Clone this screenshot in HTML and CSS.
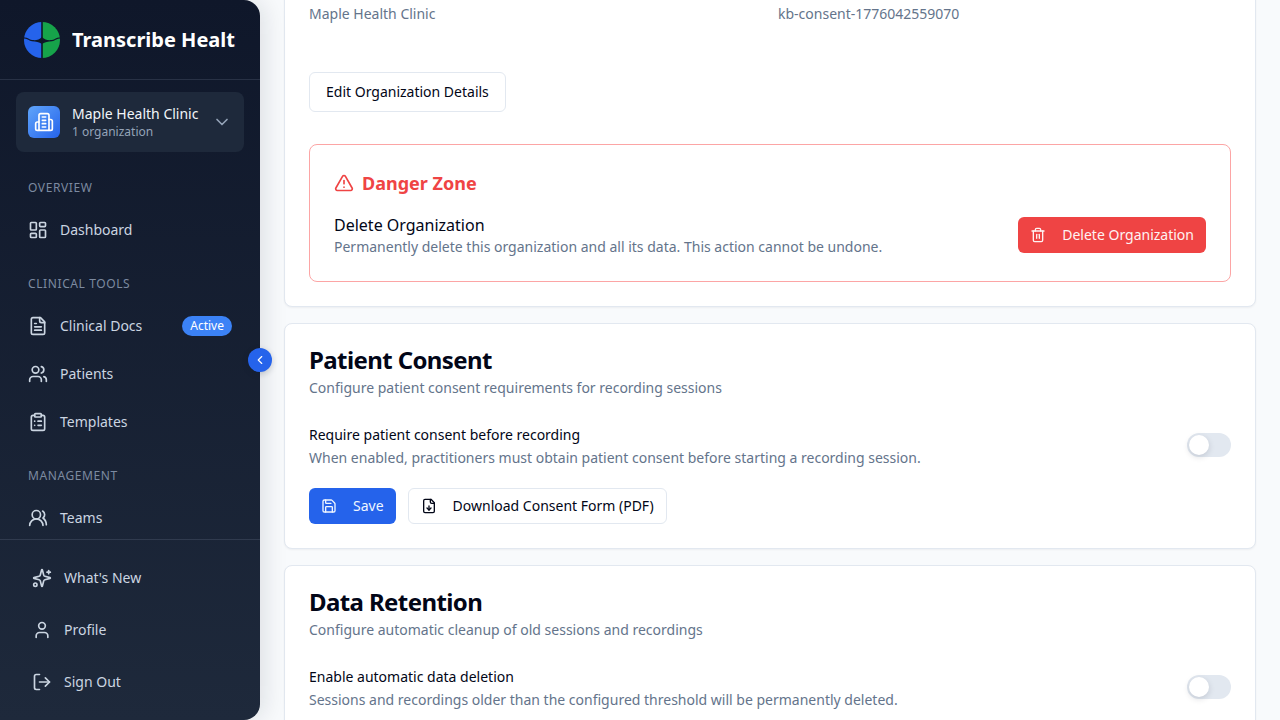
FILE: index.html
```html
<!DOCTYPE html>
<html lang="en">
<head>
  <meta charset="UTF-8">
  <title>Transcribe Health - Settings</title>
  <link rel="stylesheet" href="styles.css">
</head>
<body>
  <aside class="sidebar">
    <div class="brand">
      <svg class="logo" viewBox="0 0 36 36">
        <path d="M18 0a18 18 0 0 0-18 18 18 18 0 0 0 18 18z" fill="#2563eb"/>
        <path d="M18 0a18 18 0 0 1 18 18 18 18 0 0 1-18 18z" fill="#16a34a"/>
        <path d="M0 15.5C3 15 5 17.5 8 18 12 18.5 15 18 18 15 21 18 24 18.5 28 18 31 17.5 33 15 36 15.5L36 16.5C33 16 31 19 28 19.3 24 19.6 21 20 18 22 15 20 12 19.6 8 19.3 5 19 3 16 0 16.5Z" fill="#0f172a"/>
        <rect x="17.2" y="0" width="1.6" height="36" fill="#0f172a"/>
      </svg>
      <span class="brand-name">Transcribe Health</span>
    </div>

    <div class="org-wrap">
      <div class="org">
        <div class="org-icon">
          <svg class="icon" viewBox="0 0 24 24"><path d="M6 22V4a2 2 0 0 1 2-2h8a2 2 0 0 1 2 2v18Z"/><path d="M6 12H4a2 2 0 0 0-2 2v6a2 2 0 0 0 2 2h2"/><path d="M18 9h2a2 2 0 0 1 2 2v9a2 2 0 0 1-2 2h-2"/><path d="M10 6h4"/><path d="M10 10h4"/><path d="M10 14h4"/><path d="M10 18h4"/></svg>
        </div>
        <div class="org-text">
          <div class="org-name">Maple Health Clinic</div>
          <div class="org-count">1 organization</div>
        </div>
        <svg class="org-chevron" viewBox="0 0 24 24"><path d="m6 9 6 6 6-6"/></svg>
      </div>
    </div>

    <nav class="nav">
      <div class="nav-label">Overview</div>
      <a class="nav-item">
        <svg class="nav-icon" viewBox="0 0 24 24"><rect x="3" y="3" width="7" height="9" rx="1"/><rect x="14" y="3" width="7" height="5" rx="1"/><rect x="14" y="12" width="7" height="9" rx="1"/><rect x="3" y="16" width="7" height="5" rx="1"/></svg>
        Dashboard
      </a>

      <div class="nav-label spaced">Clinical Tools</div>
      <a class="nav-item">
        <svg class="nav-icon" viewBox="0 0 24 24"><path d="M15 2H6a2 2 0 0 0-2 2v16a2 2 0 0 0 2 2h12a2 2 0 0 0 2-2V7Z"/><path d="M14 2v4a2 2 0 0 0 2 2h4"/><path d="M10 9H8"/><path d="M16 13H8"/><path d="M16 17H8"/></svg>
        Clinical Docs
        <span class="pill">Active</span>
      </a>
      <a class="nav-item">
        <svg class="nav-icon" viewBox="0 0 24 24"><path d="M16 21v-2a4 4 0 0 0-4-4H6a4 4 0 0 0-4 4v2"/><circle cx="9" cy="7" r="4"/><path d="M22 21v-2a4 4 0 0 0-3-3.87"/><path d="M16 3.13a4 4 0 0 1 0 7.75"/></svg>
        Patients
      </a>
      <a class="nav-item">
        <svg class="nav-icon" viewBox="0 0 24 24"><rect x="8" y="2" width="8" height="4" rx="1"/><path d="M16 4h2a2 2 0 0 1 2 2v14a2 2 0 0 1-2 2H6a2 2 0 0 1-2-2V6a2 2 0 0 1 2-2h2"/><path d="M12 11h4"/><path d="M12 16h4"/><path d="M8 11h.01"/><path d="M8 16h.01"/></svg>
        Templates
      </a>

      <div class="nav-label spaced">Management</div>
      <a class="nav-item">
        <svg class="nav-icon" viewBox="0 0 24 24"><path d="M18 21a8 8 0 0 0-16 0"/><circle cx="10" cy="8" r="5"/><path d="M22 20c0-3.37-2-6.5-4-8a5 5 0 0 0-.45-8.3"/></svg>
        Teams
      </a>
    </nav>

    <div class="side-footer">
      <a class="foot-item">
        <svg class="nav-icon" viewBox="0 0 24 24"><path d="M9.937 15.5A2 2 0 0 0 8.5 14.063l-6.135-1.582a.5.5 0 0 1 0-.962L8.5 9.936A2 2 0 0 0 9.937 8.5l1.582-6.135a.5.5 0 0 1 .963 0L14.063 8.5A2 2 0 0 0 15.5 9.937l6.135 1.581a.5.5 0 0 1 0 .964L15.5 14.063a2 2 0 0 0-1.437 1.437l-1.582 6.135a.5.5 0 0 1-.963 0z"/><path d="M20 3v4"/><path d="M22 5h-4"/><circle cx="4" cy="20" r="2"/></svg>
        What's New
      </a>
      <a class="foot-item">
        <svg class="nav-icon" viewBox="0 0 24 24"><path d="M19 21v-2a4 4 0 0 0-4-4H9a4 4 0 0 0-4 4v2"/><circle cx="12" cy="7" r="4"/></svg>
        Profile
      </a>
      <a class="foot-item">
        <svg class="nav-icon" viewBox="0 0 24 24"><path d="M9 21H5a2 2 0 0 1-2-2V5a2 2 0 0 1 2-2h4"/><path d="m16 17 5-5-5-5"/><path d="M21 12H9"/></svg>
        Sign Out
      </a>
    </div>

    <button class="collapse">
      <svg viewBox="0 0 24 24"><path d="m15 18-6-6 6-6"/></svg>
    </button>
  </aside>

  <main class="main">
    <section class="card card-first">
      <div class="org-fields">
        <div>Maple Health Clinic</div>
        <div>kb-consent-1776042559070</div>
      </div>
      <button class="btn btn-plain btn-edit">Edit Organization Details</button>

      <div class="danger">
        <h3 class="danger-title">
          <svg class="icon-20" viewBox="0 0 24 24"><path d="m21.73 18-8-14a2 2 0 0 0-3.48 0l-8 14A2 2 0 0 0 4 21h16a2 2 0 0 0 1.73-3"/><path d="M12 9v4"/><path d="M12 17h.01"/></svg>
          Danger Zone
        </h3>
        <div class="danger-row">
          <div>
            <div class="danger-name">Delete Organization</div>
            <div class="muted">Permanently delete this organization and all its data. This action cannot be undone.</div>
          </div>
          <button class="btn btn-red">
            <svg class="icon-16" viewBox="0 0 24 24"><path d="M3 6h18"/><path d="M19 6v14c0 1-1 2-2 2H7c-1 0-2-1-2-2V6"/><path d="M8 6V4c0-1 1-2 2-2h4c1 0 2 1 2 2v2"/><path d="M10 11v6"/><path d="M14 11v6"/></svg>
            Delete Organization
          </button>
        </div>
      </div>
    </section>

    <section class="card">
      <h2 class="card-title">Patient Consent</h2>
      <p class="muted card-sub">Configure patient consent requirements for recording sessions</p>
      <div class="setting">
        <div>
          <div class="setting-name">Require patient consent before recording</div>
          <div class="muted setting-desc">When enabled, practitioners must obtain patient consent before starting a recording session.</div>
        </div>
        <span class="toggle"><span class="knob"></span></span>
      </div>
      <div class="actions">
        <button class="btn btn-blue">
          <svg class="icon-16" viewBox="0 0 24 24"><path d="M15.2 3a2 2 0 0 1 1.4.6l3.8 3.8a2 2 0 0 1 .6 1.4V19a2 2 0 0 1-2 2H5a2 2 0 0 1-2-2V5a2 2 0 0 1 2-2z"/><path d="M17 21v-7a1 1 0 0 0-1-1H8a1 1 0 0 0-1 1v7"/><path d="M7 3v4a1 1 0 0 0 1 1h7"/></svg>
          Save
        </button>
        <button class="btn btn-plain">
          <svg class="icon-16" viewBox="0 0 24 24"><path d="M15 2H6a2 2 0 0 0-2 2v16a2 2 0 0 0 2 2h12a2 2 0 0 0 2-2V7Z"/><path d="M14 2v4a2 2 0 0 0 2 2h4"/><path d="M12 18v-6"/><path d="m9 15 3 3 3-3"/></svg>
          Download Consent Form (PDF)
        </button>
      </div>
    </section>

    <section class="card">
      <h2 class="card-title">Data Retention</h2>
      <p class="muted card-sub">Configure automatic cleanup of old sessions and recordings</p>
      <div class="setting">
        <div>
          <div class="setting-name">Enable automatic data deletion</div>
          <div class="muted setting-desc">Sessions and recordings older than the configured threshold will be permanently deleted.</div>
        </div>
        <span class="toggle"><span class="knob"></span></span>
      </div>
    </section>
  </main>
</body>
</html>
```

FILE: styles.css
```css
* {
  box-sizing: border-box;
}

body {
  margin: 0;
  height: 100vh;
  display: flex;
  overflow: hidden;
  font-family: "Noto Sans", sans-serif;
  font-size: 14px;
  background-color: #f8fafc;
  color: #020617;
}

svg {
  fill: none;
  stroke: currentColor;
  stroke-width: 2;
  stroke-linecap: round;
  stroke-linejoin: round;
  flex-shrink: 0;
}

/* sidebar */
.sidebar {
  position: relative;
  width: 260px;
  flex-shrink: 0;
  height: 100vh;
  display: flex;
  flex-direction: column;
  background: linear-gradient(180deg, #0f172a 0%, #1e293b 100%);
  border-radius: 0 16px 16px 0;
  box-shadow: 4px 0 24px rgba(15, 23, 42, 0.12);
  color: #cbd5e1;
}

.brand {
  height: 80px;
  flex-shrink: 0;
  display: flex;
  align-items: center;
  gap: 12px;
  padding: 0 24px;
  border-bottom: 1px solid rgba(148, 163, 184, 0.18);
}

.logo {
  width: 36px;
  height: 36px;
  stroke: none;
}

.brand-name {
  width: 164px;
  overflow: hidden;
  white-space: nowrap;
  font-size: 20px;
  font-weight: 700;
  color: #fff;
}

.org-wrap {
  padding: 12px 16px;
}

.org {
  height: 60px;
  display: flex;
  align-items: center;
  gap: 12px;
  padding: 0 12px;
  background-color: #1e293b;
  border-radius: 8px;
}

.org-icon {
  width: 32px;
  height: 32px;
  display: flex;
  align-items: center;
  justify-content: center;
  border-radius: 6px;
  background: linear-gradient(135deg, #60a5fa, #2563eb);
  color: #fff;
}

.icon {
  width: 20px;
  height: 20px;
}

.org-text {
  flex: 1;
}

.org-name {
  color: #f1f5f9;
  line-height: 20px;
}

.org-count {
  font-size: 12px;
  line-height: 16px;
  color: #94a3b8;
}

.org-chevron {
  width: 20px;
  height: 20px;
  color: #94a3b8;
}

.nav {
  flex: 1;
  min-height: 0;
  overflow: hidden;
  padding-top: 12px;
}

.nav-label {
  height: 24px;
  line-height: 24px;
  padding-left: 28px;
  margin-bottom: 6px;
  font-size: 12px;
  letter-spacing: 0.6px;
  text-transform: uppercase;
  color: #7c8aa0;
}

.nav-label.spaced {
  margin-top: 18px;
}

.nav-item,
.foot-item {
  display: flex;
  align-items: center;
  gap: 12px;
  line-height: 20px;
  color: #cbd5e1;
}

.nav-item {
  height: 48px;
  padding: 0 28px;
}

.nav-icon {
  width: 20px;
  height: 20px;
}

.pill {
  margin-left: auto;
  height: 20px;
  line-height: 20px;
  padding: 0 8px;
  border-radius: 10px;
  font-size: 12px;
  color: #fff;
  background-color: #3b82f6;
}

.side-footer {
  flex-shrink: 0;
  display: flex;
  flex-direction: column;
  gap: 8px;
  padding: 16px 0;
  border-top: 1px solid rgba(148, 163, 184, 0.18);
}

.foot-item {
  height: 44px;
  padding: 0 32px;
}

.collapse {
  position: absolute;
  top: 348px;
  right: -12px;
  width: 24px;
  height: 24px;
  padding: 0;
  display: flex;
  align-items: center;
  justify-content: center;
  border: none;
  border-radius: 50%;
  background-color: #2563eb;
  color: #fff;
  box-shadow: 0 2px 6px rgba(15, 23, 42, 0.2);
}

.collapse svg {
  width: 14px;
  height: 14px;
}

/* main */
.main {
  flex: 1;
  min-width: 0;
  height: 100vh;
  overflow: hidden;
  padding: 0 24px;
  display: flex;
  flex-direction: column;
  gap: 16px;
}

.card {
  flex-shrink: 0;
  padding: 24px;
  background-color: #fff;
  border: 1px solid #e2e8f0;
  border-radius: 8px;
  box-shadow: 0 1px 2px rgba(15, 23, 42, 0.05);
}

.card-first {
  margin-top: -21px;
}

.org-fields {
  display: grid;
  grid-template-columns: 469px 1fr;
  line-height: 20px;
  color: #64748b;
}

.btn {
  display: inline-flex;
  align-items: center;
  gap: 16px;
  height: 36px;
  padding: 0 12px;
  font-family: inherit;
  font-size: 14px;
  line-height: 20px;
  font-weight: 400;
  border-radius: 6px;
  border: none;
}

.btn-plain {
  background-color: #fff;
  border: 1px solid #e2e8f0;
  color: #020617;
}

.btn-edit {
  display: flex;
  height: 40px;
  padding: 0 16px;
  margin-top: 48px;
}

.btn-red {
  background-color: #ef4444;
  color: #fef2f2;
}

.btn-blue {
  background-color: #2563eb;
  color: #eff6ff;
}

.icon-16 {
  width: 16px;
  height: 16px;
}

.icon-20 {
  width: 20px;
  height: 20px;
}

.danger {
  margin-top: 32px;
  padding: 24px;
  border: 1px solid #fca5a5;
  border-radius: 8px;
}

.danger-title {
  display: flex;
  align-items: center;
  gap: 8px;
  margin: 0 0 16px;
  font-size: 18px;
  line-height: 28px;
  font-weight: 700;
  color: #ef4444;
}

.danger-row {
  display: flex;
  align-items: center;
  justify-content: space-between;
}

.danger-name {
  font-size: 16px;
  line-height: 24px;
}

.muted {
  color: #64748b;
  line-height: 20px;
}

.card-title {
  margin: 0;
  font-size: 24px;
  line-height: 24px;
  font-weight: 700;
  letter-spacing: -0.6px;
}

.card-sub {
  margin: 6px 0 0;
}

.setting {
  margin-top: 27px;
  display: flex;
  align-items: center;
  justify-content: space-between;
}

.setting-name {
  font-weight: 400;
  line-height: 20px;
}

.setting-desc {
  margin-top: 3px;
}

.toggle {
  display: flex;
  align-items: center;
  width: 44px;
  height: 24px;
  padding: 2px;
  margin-top: -3px;
  border-radius: 12px;
  background-color: #e2e8f0;
}

.knob {
  width: 20px;
  height: 20px;
  border-radius: 50%;
  background-color: #fff;
  box-shadow: 0 2px 6px rgba(15, 23, 42, 0.15);
}

.actions {
  display: flex;
  gap: 12px;
  margin-top: 20px;
}
```
